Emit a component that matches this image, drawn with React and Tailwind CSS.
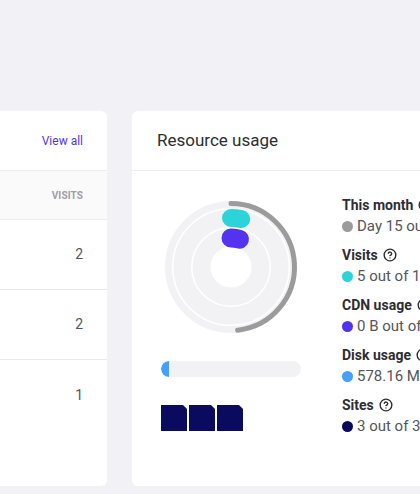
import { CircleHelp } from "lucide-react";

const font = { fontFamily: "Roboto, 'Liberation Sans', sans-serif" };

function arc(r, deg) {
  const a = (deg * Math.PI) / 180;
  const x = 70 + r * Math.sin(a);
  const y = 70 - r * Math.cos(a);
  const large = deg > 180 ? 1 : 0;
  return `M 70 ${70 - r} A ${r} ${r} 0 ${large} 1 ${x.toFixed(2)} ${y.toFixed(2)}`;
}

function Donut() {
  return (
    <svg width="140" height="140" viewBox="0 0 140 140">
      <circle cx="70" cy="70" r="62.5" fill="none" stroke="#f2f2f5" strokeWidth="7" />
      <circle cx="70" cy="70" r="48.75" fill="none" stroke="#f2f2f5" strokeWidth="17.5" />
      <circle cx="70" cy="70" r="29.5" fill="none" stroke="#f2f2f5" strokeWidth="18" />
      <path d={arc(63.5, 174)} fill="none" stroke="#9b9b9b" strokeWidth="5" strokeLinecap="round" />
      <path d={arc(49, 12)} fill="none" stroke="#2cd4d9" strokeWidth="18" strokeLinecap="round" />
      <path d={arc(29, 17)} fill="none" stroke="#5333ed" strokeWidth="19" strokeLinecap="round" />
    </svg>
  );
}

const stats = [
  { label: "This month", value: "Day 15 out of 31", color: "bg-[#9b9b9b]" },
  { label: "Visits", value: "5 out of 125,000", color: "bg-[#2cd4d9]" },
  { label: "CDN usage", value: "0 B out of 100 GB", color: "bg-[#5333ed]" },
  { label: "Disk usage", value: "578.16 MB out of 10 GB", color: "bg-[#449ffd]" },
  { label: "Sites", value: "3 out of 3", color: "bg-[#0a0a5f]" },
];

const rows = [2, 2, 1];

export default function App() {
  return (
    <div className="w-[420px] h-[494px] overflow-hidden bg-[#f2f2f6]" style={font}>
      <div className="flex gap-[25px] pt-[111px] ml-[-293px]">
        <div className="w-[400px] h-[375px] shrink-0 bg-white rounded-md overflow-hidden">
          <div className="h-[60px] flex items-center justify-end px-6 border-b border-[#ececf0]">
            <a className="text-[12px] text-[#5333ed]">View all</a>
          </div>
          <div className="h-[49px] flex items-center justify-end px-6 bg-[#fafafa] border-b border-[#ececf0]">
            <span className="text-[10px] font-bold tracking-[0.1px] text-[#a0a0a6]">VISITS</span>
          </div>
          {rows.map((v, i) => (
            <div
              key={i}
              className={`h-[70px] flex items-center justify-end px-6 ${i < 2 ? "border-b border-[#e8e8ec]" : ""}`}
            >
              <span className="text-[14px] text-[#55555a]">{v}</span>
            </div>
          ))}
        </div>

        <div className="w-[600px] h-[375px] shrink-0 bg-white rounded-md overflow-hidden">
          <div className="h-[60px] flex items-center px-[25px] border-b border-[#ececf0]">
            <h2 className="text-[17px] text-[#2d2d33]">Resource usage</h2>
          </div>
          <div className="flex items-start pl-[29px] pt-6 gap-[41px]">
            <div className="w-[140px] pt-[2px]">
              <Donut />
              <div className="mt-6 h-4 w-[140px] rounded-full bg-[#f2f2f5] overflow-hidden">
                <div className="h-4 w-[8px] rounded-l-full bg-[#449ffd]" />
              </div>
              <div className="mt-[28px] flex gap-[2px]">
                {[0, 1, 2].map((i) => (
                  <div
                    key={i}
                    className="w-[26px] h-[26px] bg-[#0a0a5f] [clip-path:polygon(0_0,calc(100%_-_4px)_0,100%_4px,100%_100%,0_100%)]"
                  />
                ))}
              </div>
            </div>
            <div className="flex flex-col gap-[8px]">
              {stats.map((s) => (
                <div key={s.label}>
                  <div className="h-5 flex items-center gap-[5px] text-[14px] font-bold text-[#2d2d33] whitespace-nowrap">
                    {s.label}
                    <CircleHelp size={14} strokeWidth={2.4} className="text-[#2d2d33]" />
                  </div>
                  <div className="h-[22px] flex items-center gap-1 text-[15px] text-[#55555a] whitespace-nowrap">
                    <span className="w-[11px] h-[11px] rounded-full shrink-0 flex">
                      <span className={`w-[11px] h-[11px] rounded-full ${s.color}`} />
                    </span>
                    {s.value}
                  </div>
                </div>
              ))}
            </div>
          </div>
        </div>
      </div>
    </div>
  );
}
